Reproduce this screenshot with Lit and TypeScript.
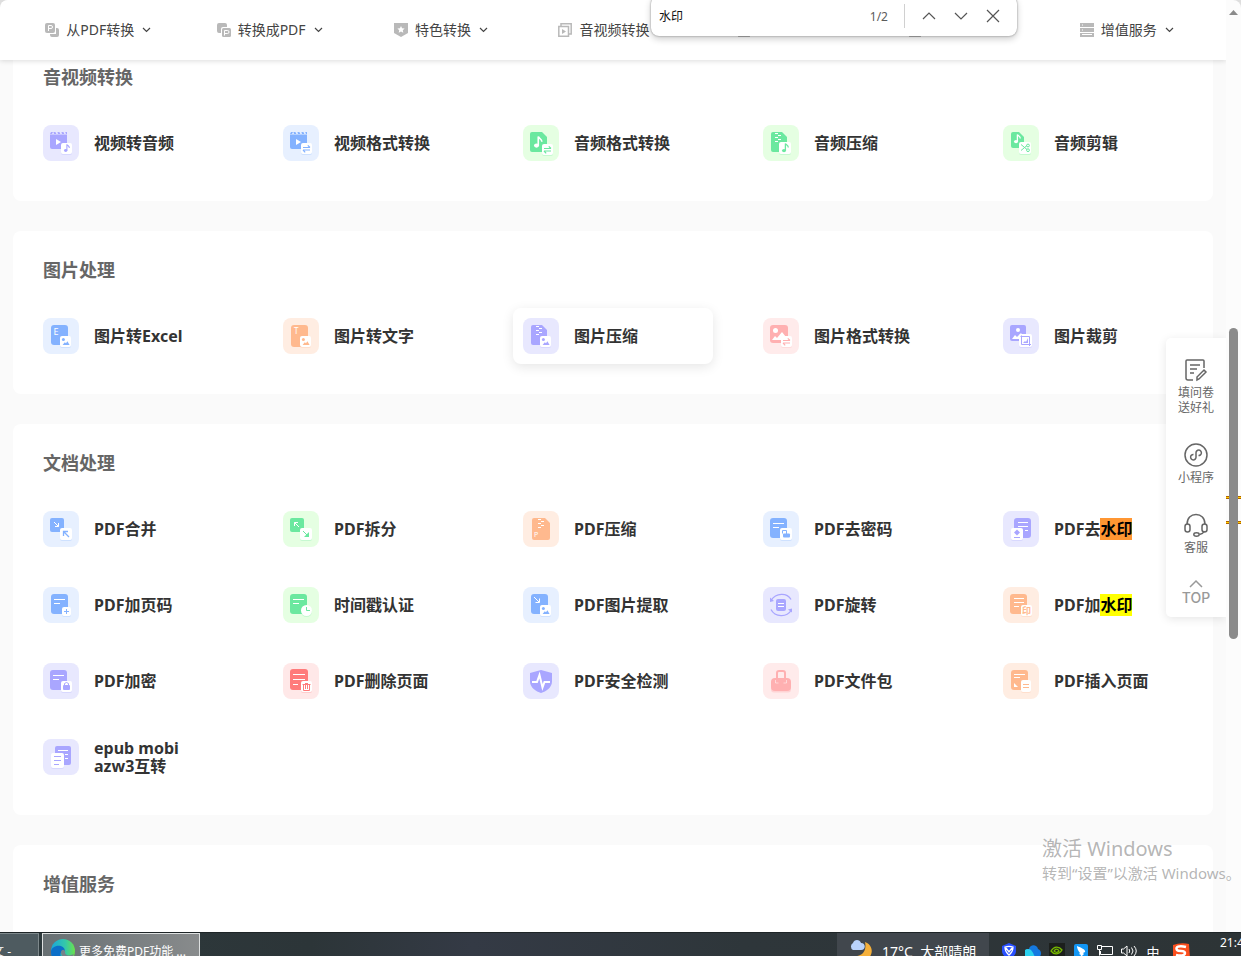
import { LitElement, html, css, svg, nothing } from "lit";
import { customElement, property } from "lit/decorators.js";

type Tone = "purple" | "blue" | "green" | "orange" | "pink" | "red";
interface Tool { icon: string; tone: Tone; label: string; mark?: string; markKind?: string; raised?: boolean; }
interface Group { title: string; tools: Tool[]; }

const groups: Group[] = [
  { title: "音视频转换", tools: [
    { icon: "videoAudio", tone: "purple", label: "视频转音频" },
    { icon: "videoFormat", tone: "blue", label: "视频格式转换" },
    { icon: "audioFormat", tone: "green", label: "音频格式转换" },
    { icon: "audioZip", tone: "green", label: "音频压缩" },
    { icon: "audioCut", tone: "green", label: "音频剪辑" },
  ] },
  { title: "图片处理", tools: [
    { icon: "imgExcel", tone: "blue", label: "图片转Excel" },
    { icon: "imgText", tone: "orange", label: "图片转文字" },
    { icon: "imgZip", tone: "purple", label: "图片压缩", raised: true },
    { icon: "imgFormat", tone: "pink", label: "图片格式转换" },
    { icon: "imgCrop", tone: "purple", label: "图片裁剪" },
  ] },
  { title: "文档处理", tools: [
    { icon: "merge", tone: "blue", label: "PDF合并" },
    { icon: "split", tone: "green", label: "PDF拆分" },
    { icon: "pdfZip", tone: "orange", label: "PDF压缩" },
    { icon: "unlock", tone: "blue", label: "PDF去密码" },
    { icon: "unmark", tone: "purple", label: "PDF去", mark: "水印", markKind: "active" },
    { icon: "pageNo", tone: "blue", label: "PDF加页码" },
    { icon: "stamp", tone: "green", label: "时间戳认证" },
    { icon: "extract", tone: "blue", label: "PDF图片提取" },
    { icon: "rotate", tone: "purple", label: "PDF旋转" },
    { icon: "addMark", tone: "orange", label: "PDF加", mark: "水印", markKind: "found" },
    { icon: "lock", tone: "purple", label: "PDF加密" },
    { icon: "remove", tone: "red", label: "PDF删除页面" },
    { icon: "safe", tone: "purple", label: "PDF安全检测" },
    { icon: "bag", tone: "pink", label: "PDF文件包" },
    { icon: "insert", tone: "orange", label: "PDF插入页面" },
    { icon: "ebook", tone: "purple", label: "epub mobi azw3互转" },
  ] },
  { title: "增值服务", tools: [] },
];

const box = (x: number, y: number, w: number, h: number, r = 3) =>
  svg`<rect x=${x} y=${y} width=${w} height=${h} rx=${r} fill="currentColor"/>`;
const badge = (x: number, y: number, w: number, h = w) =>
  svg`<rect x=${x} y=${y + 1} width=${w} height=${h} rx="2" fill="currentColor" opacity=".25"/><rect x=${x} y=${y} width=${w} height=${h} rx="2" fill="#fff"/>`;
const white = (d: string, w = 1) => svg`<path d=${d} fill="none" stroke="#fff" stroke-width=${w}/>`;
const line = (d: string, w = 1) => svg`<path d=${d} fill="none" stroke="currentColor" stroke-width=${w}/>`;
const note = (x: number, y: number, s: number, c: string) =>
  svg`<g transform="translate(${x} ${y}) scale(${s})"><ellipse cx="2" cy="7.6" rx="2" ry="1.7" fill=${c}/><path d="M3.4 7.6V.4c.3 1.6 2.9 1.5 2.9 4.2" fill="none" stroke=${c} stroke-width="1.3"/></g>`;
const picture = (x: number, y: number) =>
  svg`<circle cx=${x + 1.4} cy=${y + 1.5} r="1.5" fill="currentColor"/><path transform="translate(${x} ${y})" d="M.6 7 L2.8 4.2 4 5.2 5.4 3.2 7.6 7Z" fill="currentColor"/>`;
const swap = (x: number, y: number) =>
  svg`<g transform="translate(${x} ${y})">${line("M0 2.5h7M4.8.3l2.2 2.2M7 5H0m2.2 2.3L0 5", 1.2)}</g>`;
const cutDoc = (x: number, y: number, w: number, h: number) =>
  svg`<path transform="translate(${x} ${y})" d="M2 0H${w - 5}L${w} 5V${h - 2}a2 2 0 0 1-2 2H2a2 2 0 0 1-2-2V2a2 2 0 0 1 2-2Z" fill="currentColor"/>`;
const zip = (x: number, y: number) =>
  svg`<g transform="translate(${x} ${y})">${white("M0 .5h3M3 2.5h3M0 4.5h3M3 6.5h3M0 8.5h3")}</g>`;
const clapper = () =>
  svg`<path d="M7 9.5H24V22a2 2 0 0 1-2 2H9a2 2 0 0 1-2-2Z" fill="currentColor"/><path d="M7 9l1-2h2L9 9ZM11 9 10.4 7h2l1 2ZM15 9l-.6-2h2l1 2ZM19 9l-.6-2h2l1 2ZM23 9l-.8-2H24v2Z" fill="currentColor"/><path d="M13 14v6l5-3Z" fill="#fff"/>`;

const art: Record<string, () => unknown> = {
  videoAudio: () => svg`${clapper()}${badge(18, 18, 11)}${note(21, 19, .85, "currentColor")}`,
  videoFormat: () => svg`${clapper()}${badge(18, 18, 11)}${swap(20, 20)}`,
  audioFormat: () => svg`${cutDoc(7, 7, 17, 20)}${note(11, 11, 1.25, "#fff")}${badge(19, 19, 11)}${swap(21, 21)}`,
  audioZip: () => svg`${cutDoc(8, 7, 16, 20)}${zip(12, 8)}${badge(16, 17, 12)}${note(19, 18, 1, "currentColor")}`,
  audioCut: () => svg`${cutDoc(8, 7, 13, 16)}${note(11, 9, 1, "#fff")}${badge(16, 17, 12)}${line("M18 19.5l6 5M18 25.5l6-5")}<circle cx="25" cy="20.5" r="1.4" fill="none" stroke="currentColor"/><circle cx="25" cy="25.2" r="1.4" fill="none" stroke="currentColor"/>`,
  imgExcel: () => svg`${box(8, 7, 17, 20)}<text class="glyph" x="10.5" y="17" font-size="9">E</text>${badge(17, 18, 11)}${picture(19, 20)}`,
  imgText: () => svg`${box(8, 7, 17, 22)}<text class="glyph" x="11" y="15.5" font-size="8">T</text>${badge(17, 18, 11)}${picture(19, 20)}`,
  imgZip: () => svg`${cutDoc(8, 7, 16, 20)}${zip(13, 8)}${badge(17, 18, 11)}${picture(19, 20)}`,
  imgFormat: () => svg`${box(7, 7, 18, 18)}<circle cx="12.5" cy="12.5" r="2.5" fill="#fff"/><path d="M9 22l3-4 2 2 5-6 4 5v3Z" fill="#fff"/>${badge(18, 18, 11)}${swap(20, 20)}`,
  imgCrop: () => svg`${box(7, 7, 16, 16, 2)}<circle cx="15" cy="12" r="2" fill="#fff"/><path d="M9 21l3-4 2 2 4-4 4 6Z" fill="#fff"/>${badge(16, 16, 13)}${line("M17.500 18.500H26.500V28M18.500 17.500V26.500H28")}<path d="M20 25l2-2 1 1 2-4v5Z" fill="currentColor"/>`,
  merge: () => svg`${box(7, 7, 14, 14, 2)}${white("M11 11l4.500 4.500M15.500 12v3.500H12")}${badge(17, 17, 12)}${line("M26 26l-5-5M20.500 25v-4.500H25", 1.3)}`,
  split: () => svg`${box(7, 7, 14, 14, 2)}${white("M16 16l-4.500-4.500M11.500 15v-3.500H15")}${badge(17, 17, 12)}${line("M20 20l5 5")}<path d="M26 21v5h-5Z" fill="currentColor"/>`,
  pdfZip: () => svg`${cutDoc(9, 7, 18, 22)}${zip(15, 8)}<text class="glyph" x="11" y="26" font-size="7">P</text>`,
  unlock: () => svg`${box(7, 7, 17, 20)}${white("M10 12.500h11M10 16.500h6")}${badge(17, 17, 12)}${line("M19.500 22.500v-3h4v3.500", 1)}<rect x="20" y="22.500" width="7" height="4" rx="1" fill="currentColor"/>`,
  unmark: () => svg`${box(11, 7, 17, 20)}${white("M15 11.500h10M15 15.500h10M22 19.500h3")}${badge(8, 17, 12)}<path d="M14 18.500l3 3-3 3-3-3Z" fill="currentColor"/>${line("M11 26.500h6")}`,
  pageNo: () => svg`${box(8, 7, 17, 20)}${white("M11 12.500h11M11 16.500h6")}${badge(19, 20, 9)}${line("M21 24.500h5M23.500 22v5")}`,
  stamp: () => svg`${box(7, 7, 17, 20)}${white("M10 12.500h11M10 16.500h6")}<circle cx="23.500" cy="24.500" r="5.500" fill="currentColor" opacity=".25"/><circle cx="23.500" cy="23.500" r="5.500" fill="#fff"/>${line("M23.500 20v3.500H27")}`,
  extract: () => svg`${box(8, 7, 17, 20)}${white("M11 10l5 5M16.500 11.500v4H12.500")}${badge(17, 18, 11)}${picture(19, 20)}`,
  rotate: () => svg`${line("M8 13.500C13 5.500 24 5.500 28 12.500M8 22.500C12 30.500 24 30.500 28 23.500", 1.3)}<path d="M7 10.500V15l4-1ZM29 25.500V21.500l-4 1Z" fill="currentColor"/>${box(13, 12, 10, 12, 2)}${white("M15 16.500h6M15 19.500h6")}`,
  addMark: () => svg`${box(7, 7, 17, 20)}${white("M11 11.500h10M11 15.500h10M11 19.500h5")}${badge(18, 18, 11)}<text class="seal" x="19" y="27" font-size="9">印</text>`,
  lock: () => svg`${box(7, 7, 17, 20)}${white("M10 12.500h11M10 16.500h6")}${badge(18, 18, 11)}<rect x="20" y="22" width="7" height="5" rx="1" fill="currentColor"/>${line("M21.500 22v-1.500q2-2 4 0V22")}`,
  remove: () => svg`${box(7, 6, 18, 21)}${white("M10 11.500h12M10 16.500h12M10 21.500h5")}${badge(18, 18, 11)}${line("M19.500 21.500h8M22 20.500h3M20.500 21.500v6h6v-6M22.500 22v4M24.500 22v4")}`,
  safe: () => svg`<path d="M18 7l11 3v8.500c0 6-6 10-11 11.500-5-1.500-11-5.500-11-11.500V10Z" fill="currentColor"/>${white("M9 19h5l2.500-7 3 12.500 2-5.500H27", 2)}`,
  bag: () => svg`<path d="M11 17.500h14a3 3 0 0 1 3 3v6a3 3 0 0 1-3 3H11a3 3 0 0 1-3-3v-6a3 3 0 0 1 3-3Z" fill="currentColor" opacity=".4"/>${box(8, 15, 20, 13, 4)}${line("M14 20V10a2 2 0 0 1 2-2h4a2 2 0 0 1 2 2v10", 2)}${white("M12.500 17v3h3M20.500 20h3v-3", .5)}`,
  insert: () => svg`${box(8, 7, 17, 20)}${white("M11 11.500h11M11 14.500h6")}<path d="M11 20v4h4Z" fill="#fff"/>${badge(18, 17, 10, 12)}${line("M20 21.500h6M20 24.500h6")}`,
  ebook: () => svg`${box(12, 7, 16, 19, 2)}${white("M15 11.500h10M22 15.500h3M22 19.500h3")}${badge(8, 14, 13, 15)}${line("M11 17.500h7M11 21.500h7M11 25.500h5")}`,
};

@customElement("tool-icon")
class ToolIcon extends LitElement {
  @property() name = "";
  @property() tone: Tone = "blue";
  static styles = css`
    :host { display: block; flex: none; width: 36px; height: 36px; }
    .tile { display: block; width: 36px; height: 36px; border-radius: 8px; }
    .purple { background: #e8e8fe; color: #a9a6ff; }
    .blue { background: #e7f0ff; color: #84b2ff; }
    .green { background: #e5ffe2; color: #6be89f; }
    .orange { background: #ffede2; color: #ffb98e; }
    .pink { background: #ffebeb; color: #ffb0b1; }
    .red { background: #ffe8e8; color: #ff7b7b; }
    .glyph { fill: #fff; font-family: "Noto Sans", sans-serif; font-weight: 400; }
    .seal { fill: currentColor; font-family: "Noto Sans CJK SC", sans-serif; font-weight: 700; }
  `;
  render() {
    return html`<svg class="tile ${this.tone}" viewBox="0 0 36 36" aria-hidden="true">${art[this.name]?.()}</svg>`;
  }
}

const navItems = [
  { label: "从PDF转换", icon: svg`<rect width="10" height="10" rx="2"/><path d="M11 5h1a2 2 0 0 1 2 2v5a2 2 0 0 1-2 2H7a2 2 0 0 1-2-2v-1h6Z"/><path d="M3.500 8V2.500H6a1.500 1.500 0 0 1 0 3H3.500" fill="none" stroke="#fff"/>` },
  { label: "转换成PDF", icon: svg`<path d="M2 0h6a2 2 0 0 1 2 2v2H6a2 2 0 0 0-2 2v4H2a2 2 0 0 1-2-2V2a2 2 0 0 1 2-2Z"/><rect x="5" y="5" width="9" height="9" rx="1.500"/><path d="M7.500 12.500v-5h3a1.500 1.500 0 0 1 0 3h-3" fill="none" stroke="#fff"/>` },
  { label: "特色转换", icon: svg`<path d="M0 0h14v10l-7 4-7-4Z"/><path fill="#fff" d="M7 3l1.100 2.300 2.500.3-1.800 1.700.5 2.500L7 8.600 4.700 9.800l.5-2.500-1.800-1.700 2.500-.3Z"/>` },
  { label: "音视频转换", icon: svg`<path fill="none" stroke="#b9b9b9" stroke-width="1.500" d="M3 3V.8h10.200V11H11M.8 3.500h9.700v9.700H.8Z"/><path d="M4 6v5l4-2.500Z"/>` },
  { label: "图片处理", compact: true, icon: svg`<rect x="1" width="12" height="15" rx="2"/>` },
  { label: "文档处理", compact: true, icon: svg`<rect x="1" width="12" height="15" rx="2"/>` },
  { label: "增值服务", icon: svg`<path d="M0 0h14v4H0ZM0 5h14v4H0ZM0 10h14v4H0Z"/><path fill="none" stroke="#fff" d="M2 2h1M2 7h1M2 11.500h10"/>` },
];

@customElement("top-nav")
class TopNav extends LitElement {
  static styles = css`
    :host { display: block; position: relative; z-index: 1; flex: none; background: #fff; box-shadow: 0 1px 5px rgba(0, 0, 0, .14); }
    .nav { display: grid; grid-template-columns: repeat(7, 1fr); padding: 0 13px; height: 60px; }
    .entry { display: flex; align-items: center; justify-content: center; gap: 7px; padding: 0; border: 0; background: none; font: inherit; color: #444; font-size: 14px; line-height: 20px; white-space: nowrap; }
    .icon { width: 14px; height: 14px; fill: #b9b9b9; flex: none; }
    .arrow { width: 11px; height: 6px; fill: none; stroke: #444; stroke-width: 1.2; flex: none; }
    .blank { width: 56px; }
  `;
  render() {
    return html`<nav class="nav">${navItems.map((n) => html`
      <button class="entry" aria-label=${n.label}><svg class="icon" viewBox="0 0 14 14">${n.icon}</svg>${n.compact ? html`<span class="blank"></span>` : html`<span>${n.label}</span>`}
        <svg class="arrow" viewBox="0 0 11 6"><path d="M2 1l3.500 3.500L9 1"/></svg></button>`)}</nav>`;
  }
}

@customElement("find-bar")
class FindBar extends LitElement {
  static styles = css`
    :host { position: absolute; z-index: 3; top: -4px; right: 224px; display: flex; align-items: center; box-sizing: border-box; width: 366px; height: 40px; padding: 0 8px; border-radius: 8px; background: #fff; box-shadow: 0 0 2px rgba(0, 0, 0, .45), 0 3px 7px rgba(0, 0, 0, .2); font-size: 12px; }
    .query { flex: 1; min-width: 0; padding: 0; border: 0; outline: 0; background: none; font: inherit; line-height: 18px; color: #111; height: 24px; }
    .count { color: #5c5c5c; }
    .bar { width: 1px; height: 24px; margin: 0 8px 0 16px; background: #d0d0d0; }
    .act { display: grid; place-items: center; width: 32px; height: 24px; padding: 0; border: 0; background: none; }
    .sign { width: 14px; height: 14px; fill: none; stroke: #555; stroke-width: 1.2; }
  `;
  render() {
    const paths = [["上一个", "M1 10l6-6 6 6"], ["下一个", "M1 4l6 6 6-6"], ["关闭", "M1 1l12 12M13 1L1 13"]];
    return html`<input class="query" aria-label="在页面上查找" value="水印" /><span class="count">1/2</span><span class="bar"></span>
      ${paths.map(([t, d]) => html`<button class="act" aria-label=${t}><svg class="sign" viewBox="0 0 14 14"><path d=${d}/></svg></button>`)}`;
  }
}

@customElement("side-dock")
class SideDock extends LitElement {
  static styles = css`
    :host { position: absolute; z-index: 2; right: 0; top: 338px; display: flex; flex-direction: column; gap: 28px; box-sizing: border-box; width: 60px; padding: 20px 0 12px; border-radius: 5px 0 0 5px; background: #fff; box-shadow: 0 2px 10px rgba(0, 0, 0, .1); }
    .entry { display: flex; flex-direction: column; align-items: center; gap: 3px; padding: 0; border: 0; background: none; font: inherit; font-size: 12px; line-height: 15px; color: #666; }
    .icon { width: 24px; height: 24px; fill: none; stroke: #666; stroke-width: 1.5; }
    .top { font-family: Inter, sans-serif; font-size: 14px; font-weight: 500; color: #999; gap: 1px; margin-top: -4px; }
    .up { width: 14px; height: 10px; fill: none; stroke: #999; stroke-width: 1.5; }
  `;
  render() {
    return html`
      <button class="entry"><svg class="icon" viewBox="0 0 24 24"><path d="M9 22H4a2 2 0 0 1-2-2V3a1 1 0 0 1 1-1h16a1 1 0 0 1 1 1v7M6 7h10M6 11h7M6 15h4M13 22v-3l7-7 2 2-7 7Z"/></svg><span>填问卷<br />送好礼</span></button>
      <button class="entry"><svg class="icon" viewBox="0 0 24 24"><circle cx="12" cy="12" r="11"/><path d="M9.500 11.500a2.700 2.700 0 1 0 2.500 2.700V9.800a2.700 2.700 0 1 1 2.500 2.700"/></svg><span>小程序</span></button>
      <button class="entry"><svg class="icon" viewBox="0 0 24 24"><path d="M3 11.500C3 5 7 1.500 12 1.500s9 3.500 9 10M20.500 18c-1 2-2.500 3-5 3.500"/><rect x="1" y="11" width="5" height="8" rx="2.500"/><rect x="18" y="11" width="5" height="8" rx="2.500"/><ellipse cx="12.500" cy="21.500" rx="2.700" ry="1.700"/></svg><span>客服</span></button>
      <button class="entry top"><svg class="up" viewBox="0 0 14 10"><path d="M1 8l6-6 6 6"/></svg><span>TOP</span></button>`;
  }
}

@customElement("scroll-rail")
class ScrollRail extends LitElement {
  static styles = css`
    :host { position: relative; display: block; flex: none; width: 15px; background: #fcfcfc; }
    .up { position: absolute; left: 3px; top: 10px; width: 9px; height: 5px; fill: #8b8b8b; }
    .thumb { position: absolute; left: 3px; top: 328px; width: 9px; height: 311px; border-radius: 5px; background: #8b8b8b; }
    .tick { position: absolute; left: 0; right: 0; height: 1px; border: 1px solid #b06000; border-width: 1px 0; background: #ffd000; }
    .one { top: 496px; }
    .two { top: 521px; }
  `;
  render() {
    return html`<svg class="up" viewBox="0 0 9 5"><path d="M4.500 0L9 5H0Z"/></svg><div class="tick one"></div><div class="tick two"></div><div class="thumb"></div>`;
  }
}

@customElement("task-bar")
class TaskBar extends LitElement {
  static styles = css`
    :host { display: block; flex: none; height: 24px; overflow: hidden; background: linear-gradient(90deg, #2e3a3d, #2c3538 25%, #343a45 38%, #2e363a 60%, #2d3436); border-top: 1px solid #1e2527; box-sizing: border-box; color: #fff; font-size: 12px; }
    .row { display: flex; height: 36px; align-items: stretch; }
    .app { display: flex; align-items: center; gap: 4px; box-sizing: border-box; border: 1px solid #dde0e0; padding: 0 8px; color: #fff; font: inherit; white-space: nowrap; background: linear-gradient(90deg, #687073, #888b8c); }
    .prev { width: 39px; margin-right: 3px; border-color: #7e898c; border-left: 0; background: #4e5b60; justify-content: flex-end; padding: 0 27px 0 0; overflow: hidden; }
    .now { width: 158px; }
    .edge { width: 24px; height: 24px; flex: none; }
    .fill { flex: 1; }
    .weather { display: flex; align-items: center; gap: 8px; width: 152px; box-sizing: border-box; padding-left: 12px; background: #41474d; font-size: 14px; white-space: nowrap; }
    .sky { width: 25px; height: 24px; }
    .tray { display: flex; align-items: center; gap: 8px; padding: 0 12px; }
    .sign { width: 16px; height: 16px; }
    .ime { width: 16px; font-size: 13px; text-align: center; }
    .sogou { width: 18px; height: 16px; margin-left: 3px; }
    .clock { width: 21px; margin-left: 18px; padding-top: 1px; line-height: 18px; overflow: hidden; }
  `;
  render() {
    return html`<div class="row">
      <button class="app prev"><span>文 -</span></button>
      <button class="app now">
        <svg class="edge" viewBox="0 0 24 24"><defs><linearGradient id="g"><stop stop-color="#18a7dc"/><stop offset=".6" stop-color="#35c8a8"/><stop offset="1" stop-color="#6be24b"/></linearGradient></defs><circle cx="12" cy="12" r="12" fill="url(#g)"/><path d="M0 13C0 6 13 4 14 12c-5-2-7 6 0 11C6 25 0 20 0 13Z" fill="#0c6fc8"/><path d="M10 13c1-4 5-2 4 1 1 3 5 3 9 1l-3 5c-5 1-10-2-10-7Z" fill="#75838a"/></svg>
        <span>更多免费PDF功能 ...</span></button>
      <div class="fill"></div>
      <div class="weather"><svg class="sky" viewBox="0 0 25 24"><path d="M16 3c9 3 9 15 0 18-4 1-9 0-11-4 8 1 13-5 11-14Z" fill="#f5b03a"/><path d="M4 11a4 4 0 0 1 0-7c1-4 7-4 8 0 5 0 5 7 0 7Z" fill="#b9d2fb"/></svg><span>17°C&nbsp; 大部晴朗</span></div>
      <div class="tray">
        <svg class="sign" viewBox="0 0 16 16"><path d="M8 0l7 3v5c0 4-4 7-7 8-3-1-7-4-7-8V3Z" fill="#2850ff"/><path d="M4 4c3-1 5-1 8 0 0 5-2 6-4 8-2-2-4-3-4-8Zm1 1l3 4 3-4" fill="none" stroke="#fff" stroke-width="1.300"/></svg>
        <svg class="sign" viewBox="0 0 16 16"><path d="M3 14a4 4 0 0 1 1-8c1-5 8-5 9 0 4 1 4 8 0 8Z" fill="#1579e0"/><path d="M3 14a4 4 0 0 1 0-8c4 0 5 4 7 8Z" fill="#2bd0ee"/></svg>
        <svg class="sign" viewBox="0 0 16 16"><path d="M0 0h16v16H0Z" fill="#1c1f1c"/><path d="M2 8c3-5 8-5 11-1-3 5-8 5-11 1Zm3 0c2-3 4-2 5 0-2 2-3 2-5 0Z" fill="none" stroke="#77b900" stroke-width="1.300"/></svg>
        <svg class="sign" viewBox="0 0 16 16"><rect x="1" y="1" width="14" height="14" rx="2" fill="#1296f5"/><path d="M4 3c5 2 9 4 8 6l-2 1 1 1-4 4 1-3-2-1 1-1C5 8 4 5 4 3Z" fill="#fff"/></svg>
        <svg class="sign" viewBox="0 0 16 16" fill="none" stroke="#fff"><path d="M5 3.500h10.500v8H3.500V8M8 14.500h6M.5 2.500h4v4h-4ZM2.500 6.500v6"/></svg>
        <svg class="sign" viewBox="0 0 16 16" fill="none" stroke="#fff"><path d="M.5 6v4h2L6 13V3L2.500 6ZM8 6q1.500 2 0 4M10.500 4.500q3 3.500 0 7M13 3q4.500 5 0 10"/></svg>
        <span class="ime">中</span>
        <svg class="sogou" viewBox="0 0 18 16"><path d="M1 2Q9-1 17 1l1 15H1Z" fill="#fb4f1e"/><path d="M14 4C7 2 3 4 5 7c2 2 8 0 8 3s-5 3-9 2" fill="none" stroke="#fff" stroke-width="2.500"/></svg>
        </div>
      <span class="clock">21:4</span>
    </div>`;
  }
}

@customElement("app-root")
class AppRoot extends LitElement {
  static styles = css`
    :host { display: flex; flex-direction: column; height: 100vh; position: relative; overflow: hidden; background: #dedede; font-family: "Noto Sans", "Noto Sans CJK SC", sans-serif; }
    .window { position: relative; flex: 1; min-height: 0; display: flex; border-radius: 8px 8px 0 0; overflow: hidden; }
    .page { position: relative; flex: 1; min-width: 0; display: flex; flex-direction: column; background: #fafafa; overflow: hidden; }
    .list { display: flex; flex-direction: column; gap: 30px; margin-top: -22px; padding: 0 13px; }
    .card { padding: 27px 20px 30px; border-radius: 8px; background: #fff; }
    .title { margin: 0 0 26px; padding-left: 10px; font-size: 18px; line-height: 24px; font-weight: 700; color: #666; }
    .grid { display: grid; grid-template-columns: repeat(5, minmax(0, 1fr)); gap: 20px 40px; }
    .tool { display: flex; align-items: center; gap: 15px; padding: 10px; border-radius: 8px; color: #333; font-size: 16px; line-height: 18px; font-weight: 700; text-decoration: none; }
    .raised { background: #fff; box-shadow: 0 3px 12px rgba(0, 0, 0, .1); }
    .hit { color: #000; background: #ff0; }
    .active { background: #ff9632; }
    .notice { position: absolute; z-index: 4; right: 0; bottom: 73px; width: 199px; color: rgba(140, 140, 140, .65); font-size: 15px; line-height: 20px; white-space: nowrap; pointer-events: none; }
    .lead { display: block; font-size: 20px; line-height: 28px; }
  `;
  render() {
    return html`
      <div class="window">
        <div class="page">
          <top-nav></top-nav>
          <main class="list">${groups.map((g) => html`
            <section class="card"><h2 class="title">${g.title}</h2>
              <div class="grid">${g.tools.map((t) => html`
                <a class="tool ${t.raised ? "raised" : ""}" href="#"><tool-icon .name=${t.icon} .tone=${t.tone}></tool-icon>
                  <span>${t.label}${t.mark ? html`<mark class="hit ${t.markKind}">${t.mark}</mark>` : nothing}</span></a>`)}</div>
            </section>`)}</main>
          <side-dock></side-dock>
        </div>
        <scroll-rail></scroll-rail>
        <find-bar></find-bar>
      </div>
      <task-bar></task-bar>
      <div class="notice"><span class="lead">激活 Windows</span>转到“设置”以激活 Windows。</div>`;
  }
}
